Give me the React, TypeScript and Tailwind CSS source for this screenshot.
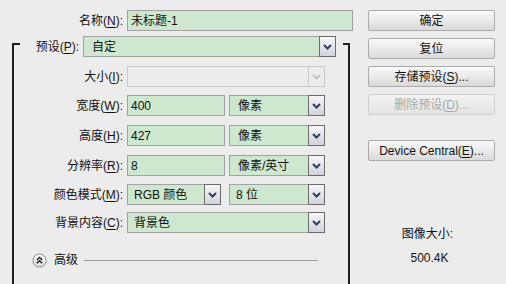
import {clsx} from "clsx";
import type {ReactNode} from "react";

function Chevron({disabled}: {disabled?: boolean}) {
    return (
        <svg width="9" height="6" viewBox="0 0 9 6">
            <path d="M1 1 L4.5 4.5 L8 1" fill="none" stroke={disabled ? "#c4c4c4" : "#2f3f63"} strokeWidth="2" />
        </svg>
    );
}

function Field({w, value, pad = "pl-[3px]"}: {w: string; value?: string; pad?: string}) {
    return (
        <div className={clsx("h-[21px] flex items-center bg-[#cde8cf] border border-[#a2a2a2] whitespace-nowrap", w, pad)}>
            {value}
        </div>
    );
}

function Select({w, value, disabled, pad = "pl-[8px]"}: {w: string; value?: string; disabled?: boolean; pad?: string}) {
    return (
        <div className={clsx("h-[21px] flex", w)}>
            <div
                className={clsx(
                    "flex-1 flex items-center border-y border-l whitespace-nowrap",
                    disabled ? "bg-[#ececec] border-[#c9c9c9]" : "bg-[#cde8cf] border-[#a2a2a2]",
                    pad
                )}
            >
                {value}
            </div>
            <div
                className={clsx(
                    "w-[17px] h-full flex items-center justify-center border",
                    disabled ? "border-[#c9c9c9] bg-[#ececec]" : "border-[#6c6c6c] bg-linear-to-b from-[#f7f7f8] to-[#cfd3db]"
                )}
            >
                <Chevron disabled={disabled} />
            </div>
        </div>
    );
}

function Row({label, className, children}: {label: ReactNode; className?: string; children: ReactNode}) {
    return (
        <div className={clsx("flex h-[21px]", className)}>
            <div className="w-[113px] pr-[4px] flex items-center justify-end whitespace-nowrap">{label}</div>
            <div className="flex gap-[4px]">{children}</div>
        </div>
    );
}

function Button({children, disabled, className}: {children: ReactNode; disabled?: boolean; className?: string}) {
    return (
        <div
            className={clsx(
                "w-[127px] h-[21px] flex items-center justify-center rounded-[2px] border whitespace-nowrap",
                disabled
                    ? "border-[#cfcfcf] bg-linear-to-b from-[#f3f3f3] to-[#e4e4e4] text-[#a8a8a8]"
                    : "border-[#ababab] bg-linear-to-b from-[#fafafa] to-[#dadada] text-[#111]",
                className
            )}
        >
            {children}
        </div>
    );
}

const U = ({c}: {c: string}) => <span className="underline underline-offset-2">{c}</span>;

export default function App() {
    return (
        <div className="w-[506px] h-[284px] overflow-hidden flex bg-[#ececec] text-[12px] leading-[14px] text-[#111] font-['Liberation_Sans','Noto_Sans_CJK_SC',sans-serif]">
            {/* left: form */}
            <div className="w-[368px] h-full flex flex-col">
                <div className="mt-[10px] flex h-[21px]">
                    <div className="w-[127px] pr-[4px] flex items-center justify-end">名称(<U c="N" />):</div>
                    <Field w="w-[226px]" value="未标题-1" />
                </div>

                <div className="ml-[12px] w-[338px] mt-[5px] flex-1 flex flex-col">
                    <div className="flex h-[21px]">
                        <div className="w-[8px] mt-[7px] h-[14px] border-t-2 border-l-2 border-[#1e1e1e]" />
                        <div className="w-[63px] pr-[4px] flex items-center justify-end">预设(<U c="P" />):</div>
                        <Select w="w-[253px]" value="自定" />
                        <div className="w-[7px]" />
                        <div className="w-[7px] mt-[7px] h-[14px] border-t-2 border-r-2 border-[#1e1e1e]" />
                    </div>

                    <div className="flex-1 border-l-2 border-r-2 border-[#1e1e1e] flex flex-col">
                        <Row label={<>大小(<U c="I" />):</>} className="mt-[9px]">
                            <Select w="w-[198px]" disabled />
                        </Row>
                        <Row label={<>宽度(<U c="W" />):</>} className="mt-[8px]">
                            <Field w="w-[98px]" value="400" />
                            <Select w="w-[96px]" value="像素" />
                        </Row>
                        <Row label={<>高度(<U c="H" />):</>} className="mt-[9px]">
                            <Field w="w-[98px]" value="427" />
                            <Select w="w-[96px]" value="像素" />
                        </Row>
                        <Row label={<>分辨率(<U c="R" />):</>} className="mt-[9px]">
                            <Field w="w-[98px]" value="8" />
                            <Select w="w-[96px]" value="像素/英寸" />
                        </Row>
                        <Row label={<>颜色模式(<U c="M" />):</>} className="mt-[8px]">
                            <Select w="w-[94px]" value="RGB 颜色" pad="pl-[6px]" />
                            <div className="ml-[4px]">
                                <Select w="w-[96px]" value="8 位" pad="pl-[6px]" />
                            </div>
                        </Row>
                        <Row label={<>背景内容(<U c="C" />):</>} className="mt-[7px]">
                            <Select w="w-[198px]" value="背景色" pad="pl-[6px]" />
                        </Row>

                        <div className="mt-[20px] h-[14px] flex items-center">
                            <svg width="15" height="15" viewBox="0 0 15 15" className="ml-[18px]">
                                <defs>
                                    <linearGradient id="adv" x1="0" y1="0" x2="0" y2="1">
                                        <stop offset="0" stopColor="#ffffff" />
                                        <stop offset="1" stopColor="#dcdcdc" />
                                    </linearGradient>
                                </defs>
                                <circle cx="7.5" cy="7.5" r="6.6" fill="url(#adv)" stroke="#8c8c8c" strokeWidth="1" />
                                <path d="M4.8 7 L7.5 4.4 L10.2 7" fill="none" stroke="#1e1e1e" strokeWidth="1.4" />
                                <path d="M4.8 10.3 L7.5 7.7 L10.2 10.3" fill="none" stroke="#1e1e1e" strokeWidth="1.4" />
                            </svg>
                            <span className="ml-[7px]">高级</span>
                            <div className="ml-[6px] w-[234px] h-px bg-[#9a9a9a]" />
                        </div>
                    </div>
                </div>
            </div>

            {/* right: buttons */}
            <div className="w-[127px] pt-[10px] flex flex-col">
                <Button>确定</Button>
                <Button className="mt-[7px]">复位</Button>
                <Button className="mt-[7px]">存储预设(<U c="S" />)...</Button>
                <Button className="mt-[7px]" disabled>删除预设(<U c="D" />)...</Button>
                <Button className="mt-[25px]">Device Central(<U c="E" />)...</Button>
                <div className="mt-[66px] pr-[8px] text-center">图像大小:</div>
                <div className="mt-[10px] pr-[4px] text-center">500.4K</div>
            </div>
        </div>
    );
}
